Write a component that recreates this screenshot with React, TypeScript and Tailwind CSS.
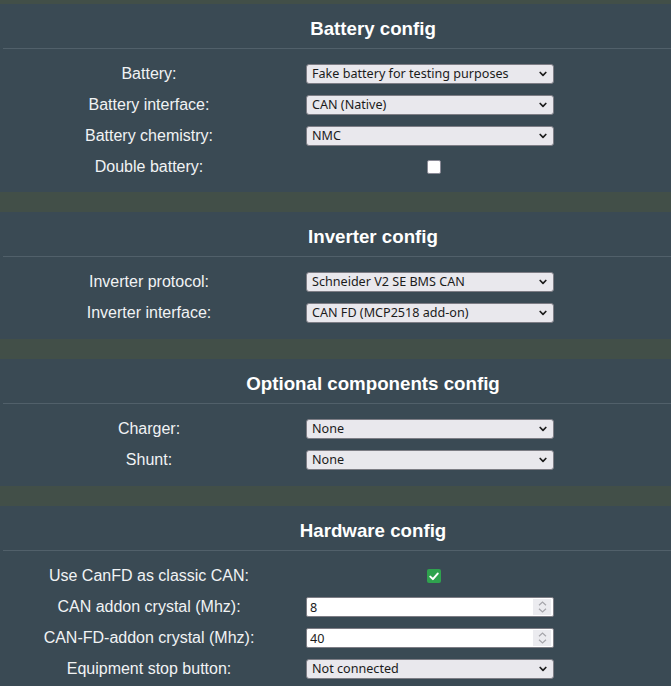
import React from "react";

type Row =
  | { kind: "select"; label: string; value: string }
  | { kind: "check"; label: string; checked: boolean }
  | { kind: "number"; label: string; value: string };

type Section = { title: string; rows: Row[] };

const sections: Section[] = [
  {
    title: "Battery config",
    rows: [
      { kind: "select", label: "Battery:", value: "Fake battery for testing purposes" },
      { kind: "select", label: "Battery interface:", value: "CAN (Native)" },
      { kind: "select", label: "Battery chemistry:", value: "NMC" },
      { kind: "check", label: "Double battery:", checked: false },
    ],
  },
  {
    title: "Inverter config",
    rows: [
      { kind: "select", label: "Inverter protocol:", value: "Schneider V2 SE BMS CAN" },
      { kind: "select", label: "Inverter interface:", value: "CAN FD (MCP2518 add-on)" },
    ],
  },
  {
    title: "Optional components config",
    rows: [
      { kind: "select", label: "Charger:", value: "None" },
      { kind: "select", label: "Shunt:", value: "None" },
    ],
  },
  {
    title: "Hardware config",
    rows: [
      { kind: "check", label: "Use CanFD as classic CAN:", checked: true },
      { kind: "number", label: "CAN addon crystal (Mhz):", value: "8" },
      { kind: "number", label: "CAN-FD-addon crystal (Mhz):", value: "40" },
      { kind: "select", label: "Equipment stop button:", value: "Not connected" },
    ],
  },
];

const fieldFont = { fontFamily: '"Noto Sans", "Open Sans", sans-serif' };

function Chevron() {
  return (
    <svg width="8" height="6" viewBox="0 0 8 6" className="pointer-events-none absolute right-[7px] top-[7px]">
      <path d="M1.2 1.5 L4 4.3 L6.8 1.5" fill="none" stroke="#1c1c1c" strokeWidth="1.7" strokeLinecap="round" strokeLinejoin="round" />
    </svg>
  );
}

function SelectBox({ value }: { value: string }) {
  return (
    <div className="relative h-[20px] w-[248px]">
      <select
        defaultValue={value}
        style={fieldFont}
        className="block h-[20px] w-[248px] appearance-none rounded-[3px] border border-[#7d7d85] bg-[#e9e8ed] pl-[5px] pr-[20px] text-[12.6px] leading-[18px] text-[#1b1b1b] outline-none"
      >
        <option>{value}</option>
      </select>
      <Chevron />
    </div>
  );
}

function NumberBox({ value }: { value: string }) {
  return (
    <div className="relative h-[20px] w-[248px]">
      <input
        type="text"
        defaultValue={value}
        style={fieldFont}
        className="block h-[20px] w-[248px] rounded-[2px] border border-[#7d7d85] bg-white pl-[3px] text-[12.6px] leading-[18px] text-[#1b1b1b] outline-none"
      />
      <div className="pointer-events-none absolute right-[3px] top-[2px] flex h-[16px] w-[18px] flex-col items-center justify-center gap-[2px] bg-[#ebebef]">
        <svg width="9" height="5" viewBox="0 0 9 5" className="block">
          <path d="M1 4.2 L4.5 1 L8 4.2" fill="none" stroke="#a6a6ab" strokeWidth="1.2" />
        </svg>
        <svg width="9" height="5" viewBox="0 0 9 5" className="block">
          <path d="M1 0.8 L4.5 4 L8 0.8" fill="none" stroke="#a6a6ab" strokeWidth="1.2" />
        </svg>
      </div>
    </div>
  );
}

function CheckBox({ checked }: { checked: boolean }) {
  return (
    <div className="flex h-[20px] w-[256px] items-center justify-center">
      {checked ? (
        <span className="flex h-[14px] w-[14px] items-center justify-center rounded-[2px] bg-[#2fa24e]">
          <svg width="10" height="9" viewBox="0 0 10 9" className="block">
            <path d="M1.3 4.6 L3.9 7.1 L8.7 1.6" fill="none" stroke="#ffffff" strokeWidth="2" strokeLinecap="round" strokeLinejoin="round" />
          </svg>
        </span>
      ) : (
        <span className="block h-[14px] w-[14px] rounded-[2px] border border-[#8a8a96] bg-white" />
      )}
    </div>
  );
}

function FieldRow({ row }: { row: Row }) {
  return (
    <div className="flex h-[20px] items-center">
      <div className="w-[298px] text-center text-[16px] leading-[20px] text-[#f1f3f4]">{row.label}</div>
      <div className="ml-[8px] flex h-[20px] items-center">
        {row.kind === "select" && <SelectBox value={row.value} />}
        {row.kind === "number" && <NumberBox value={row.value} />}
        {row.kind === "check" && <CheckBox checked={row.checked} />}
      </div>
    </div>
  );
}

function ConfigCard({ section, first }: { section: Section; first: boolean }) {
  return (
    <section className={first ? "bg-[#3a4a54] pt-[14px] pb-[15px]" : "bg-[#3a4a54] pt-[14px] pb-[16px]"}>
      <h3 className="text-center text-[18.72px] font-bold leading-[22px] text-white">{section.title}</h3>
      <div className="ml-[3px] mt-[8px] h-px bg-[#51606a]" />
      <div className="mt-[15px] flex flex-col gap-[11px]">
        {section.rows.map((row) => (
          <FieldRow key={row.label} row={row} />
        ))}
      </div>
    </section>
  );
}

export default function App() {
  return (
    <div
      className="min-h-[686px] w-full overflow-hidden bg-[#424f48]"
      style={{ fontFamily: '"Liberation Sans", Arial, sans-serif' }}
    >
      <div className="flex w-[746px] flex-col gap-[20px] pt-[4px] pb-[20px]">
        {sections.map((s, i) => (
          <ConfigCard key={s.title} section={s} first={i === 0} />
        ))}
      </div>
    </div>
  );
}
